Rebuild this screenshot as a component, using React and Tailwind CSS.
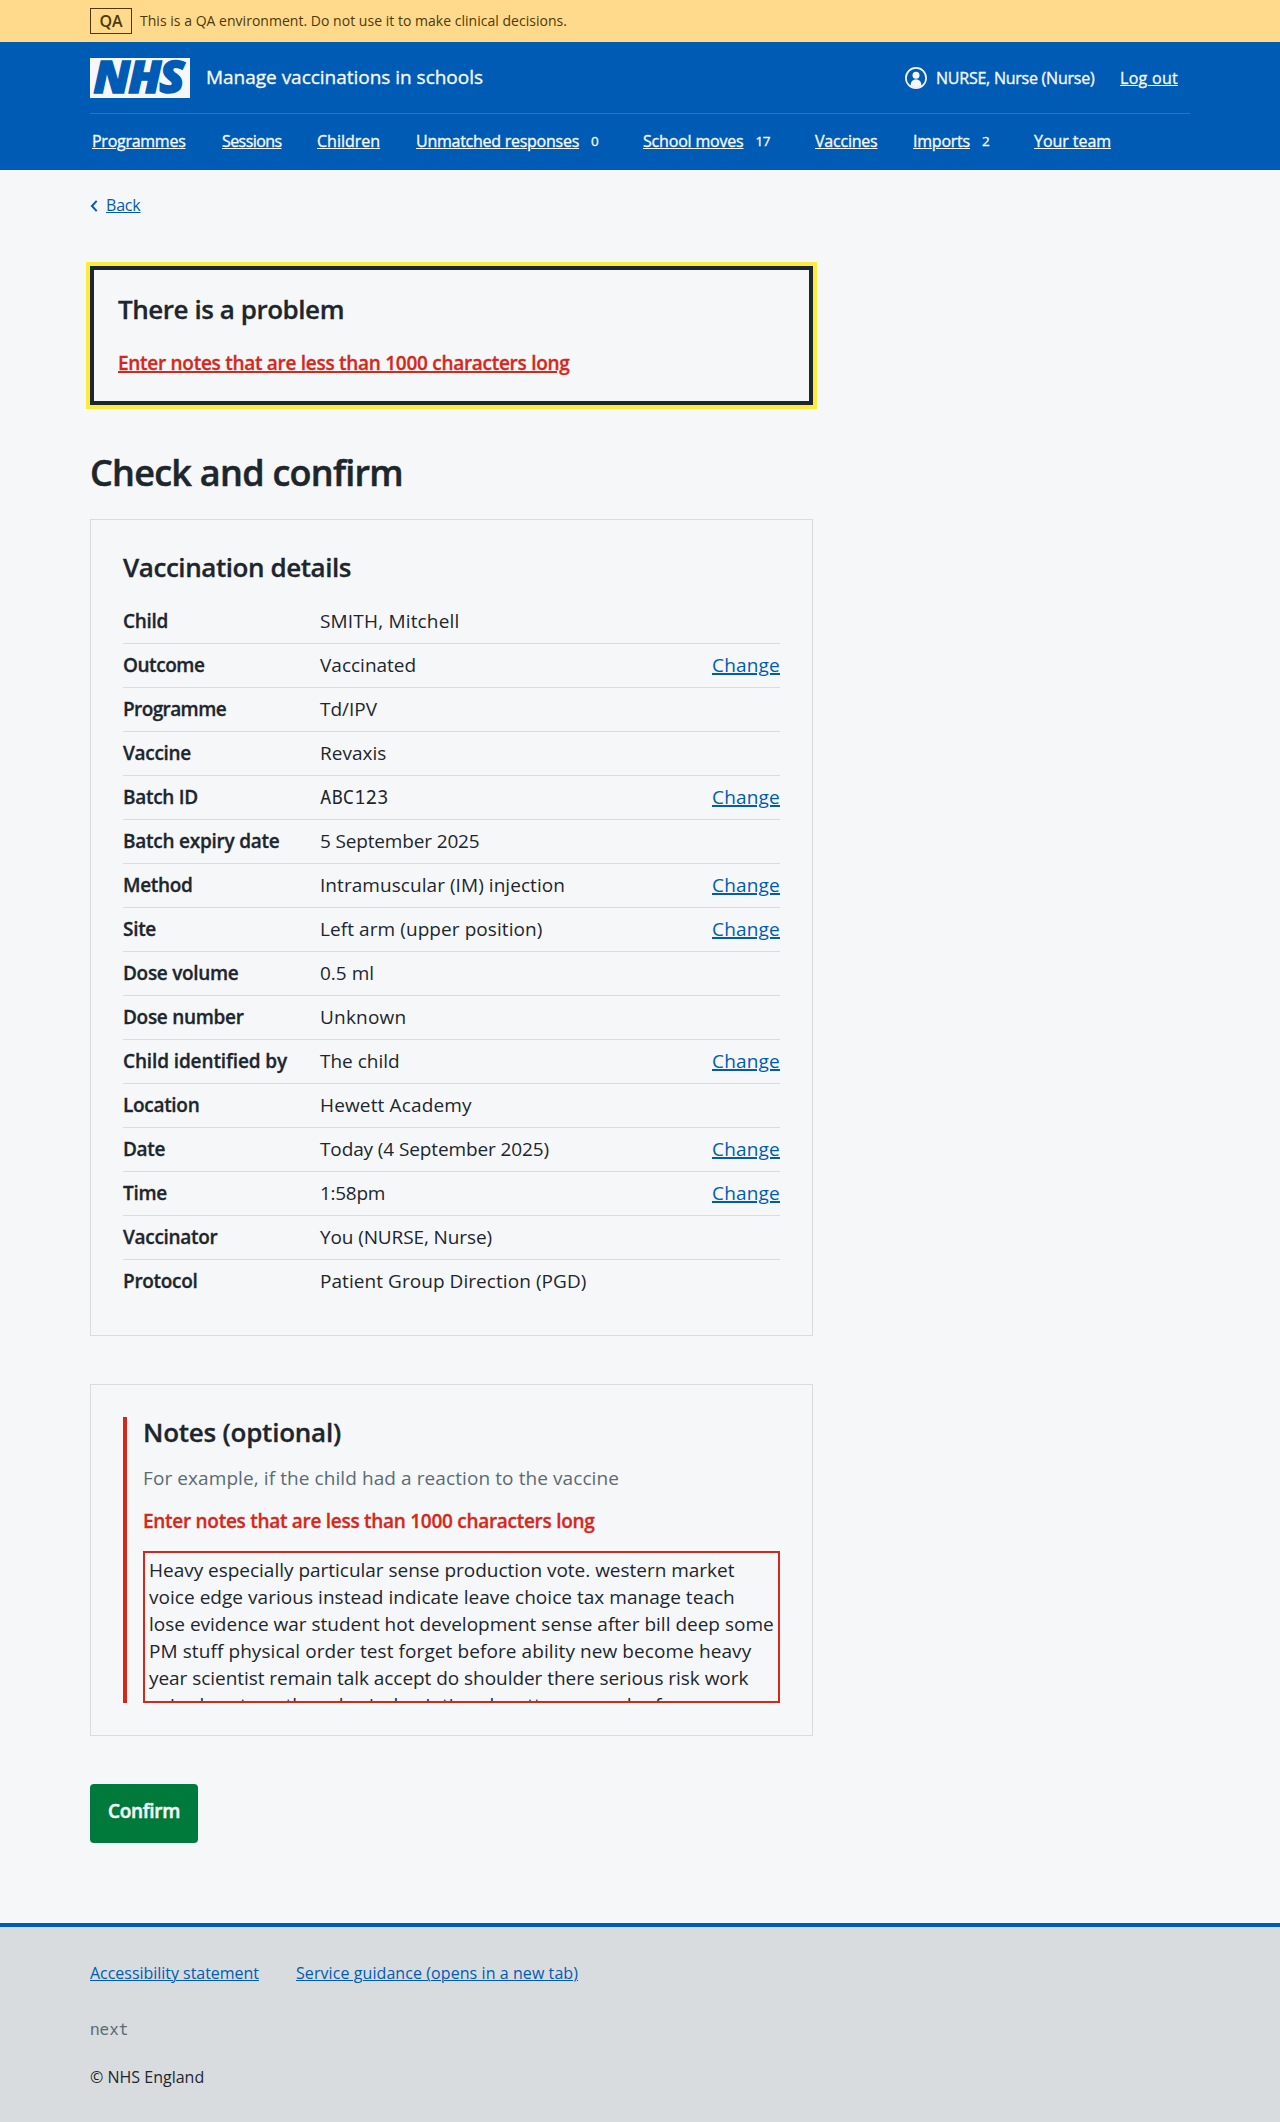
import React from "react";

const LINK = "underline decoration-1 underline-offset-[1px]";

const NAV = [
  { label: "Programmes", item: "w-[130px]", track: "tracking-[-0.0165em]" },
  { label: "Sessions", item: "w-[95px]", track: "tracking-[-0.036em]" },
  { label: "Children", item: "w-[99px]", track: "tracking-normal" },
  { label: "Unmatched responses", count: "0", item: "w-[227px]", track: "tracking-[-0.0161em]" },
  { label: "School moves", count: "17", item: "w-[172px]", track: "tracking-[-0.0116em]" },
  { label: "Vaccines", item: "w-[98px]", track: "tracking-[-0.0134em]" },
  { label: "Imports", count: "2", item: "w-[121px]", track: "tracking-[-0.014em]" },
  { label: "Your team", item: "w-[90px]", track: "tracking-[-0.0033em]" },
];

const ROWS = [
  { key: "Child", value: "SMITH, Mitchell", valueClass: "tracking-[0.0094em]" },
  { key: "Outcome", value: "Vaccinated", change: true, keyClass: "tracking-[-0.0237em]" },
  { key: "Programme", value: "Td/IPV", keyClass: "tracking-[-0.0318em]" },
  { key: "Vaccine", value: "Revaxis" },
  { key: "Batch ID", value: "ABC123", change: true, valueClass: "font-['Noto_Sans_Mono','DejaVu_Sans_Mono',monospace]" },
  { key: "Batch expiry date", value: "5 September 2025", valueClass: "tracking-[-0.0082em]", keyClass: "tracking-[-0.0129em]" },
  { key: "Method", value: "Intramuscular (IM) injection", change: true, valueClass: "tracking-[0.003em]" },
  { key: "Site", value: "Left arm (upper position)", change: true, valueClass: "tracking-[0.004em]" },
  { key: "Dose volume", value: "0.5 ml" },
  { key: "Dose number", value: "Unknown", valueClass: "tracking-[0.01em]" },
  { key: "Child identified by", value: "The child", change: true, keyClass: "tracking-[-0.0064em]" },
  { key: "Location", value: "Hewett Academy", valueClass: "tracking-[0.008em]" },
  { key: "Date", value: "Today (4 September 2025)", change: true, valueClass: "tracking-[-0.006em]" },
  { key: "Time", value: "1:58pm", change: true, valueClass: "tracking-[-0.015em]" },
  { key: "Vaccinator", value: "You (NURSE, Nurse)", valueClass: "tracking-[-0.006em]" },
  { key: "Protocol", value: "Patient Group Direction (PGD)", valueClass: "tracking-[0.003em]" },
];

const NOTES = [
  { text: "Heavy especially particular sense production vote. western market", track: "tracking-[-0.001em]" },
  { text: "voice edge various instead indicate leave choice tax manage teach", track: "tracking-[0.002em]" },
  { text: "lose evidence war student hot development sense after bill deep some", track: "tracking-normal" },
  { text: "PM stuff physical order test forget before ability new become heavy", track: "tracking-[0.0045em]" },
  { text: "year scientist remain talk accept do shoulder there serious risk work", track: "tracking-[-0.0025em]" },
  { text: "voice heart another physical painting she attorney under for", track: "tracking-normal" },
];

function NhsLogo() {
  return (
    <svg className="block h-10 w-[100px]" viewBox="0 0 100 40" role="img" aria-label="NHS">
      <rect width="100" height="40" fill="#f6f7f9" />
      <text
        x="3.6"
        y="35.3"
        fill="#005bb5"
        stroke="#005bb5"
        strokeWidth="1.4"
        fontFamily="'Open Sans', sans-serif"
        fontSize="44"
        fontWeight="800"
        fontStyle="italic"
        letterSpacing="-2"
        textLength="89"
        lengthAdjust="spacingAndGlyphs"
      >
        NHS
      </text>
    </svg>
  );
}

function UserIcon() {
  return (
    <svg className="block size-[22px]" viewBox="0 0 22 22" aria-hidden="true">
      <circle cx="11" cy="11" r="10.1" fill="none" stroke="#f6f7f9" strokeWidth="1.7" />
      <circle cx="11" cy="8.3" r="3.5" fill="#f6f7f9" />
      <path d="M5.7 18.8v-1.2a5.3 5.3 0 0 1 10.6 0v1.2A9.7 9.7 0 0 1 11 21a9.7 9.7 0 0 1-5.3-2.2z" fill="#f6f7f9" />
    </svg>
  );
}

function Header() {
  return (
    <header className="h-32 bg-[#005bb5] text-[#f6f7f9] [-webkit-text-stroke:0.35px_#f6f7f9]">
      <div className="mx-auto w-[1100px]">
        <div className="flex h-[72px] items-center justify-between border-b border-[#2b76c1] pt-px pr-3">
          <div className="flex items-center">
            <NhsLogo />
            <span className="mb-0.5 ml-4 text-[19px] leading-[27px] tracking-[-0.001em]">Manage vaccinations in schools</span>
          </div>
          <div className="flex items-center text-base leading-[22px]">
            <UserIcon />
            <span className="mb-px ml-[9px] w-[184px] tracking-[-0.015em] whitespace-nowrap">NURSE, Nurse (Nurse)</span>
            <a className={`${LINK} mb-px tracking-[0.018em]`}>Log out</a>
          </div>
        </div>
        <nav className="flex pt-[15px] pl-0.5 text-base leading-6">
          {NAV.map((n) => (
            <span key={n.label} className={`${n.item} flex shrink-0 whitespace-nowrap`}>
              <a className={`${LINK} ${n.track}`}>{n.label}</a>
              {n.count && <span className="ml-3 text-[13.5px] tracking-[-0.03em]">{n.count}</span>}
            </span>
          ))}
        </nav>
      </div>
    </header>
  );
}

function SummaryRow({ row, last }) {
  return (
    <div className={`flex pt-2 text-[19px] leading-[27px] ${last ? "h-[43px]" : "h-11 border-b border-[#d9dbde]"}`}>
      <dt className={`w-[197px] font-semibold [-webkit-text-stroke:0.3px_currentColor] ${row.keyClass ?? "tracking-[-0.016em]"}`}>
        {row.key}
      </dt>
      <dd className={`flex-1 ${row.valueClass ?? ""}`}>{row.value}</dd>
      {row.change && (
        <dd className="tracking-[0.0104em]">
          <a className="text-[#005bb5] underline decoration-[1.5px] underline-offset-[1px]">Change</a>
        </dd>
      )}
    </div>
  );
}

export default function App() {
  return (
    <div className="h-[2122px] bg-[#f6f7f9] font-['Open_Sans','Noto_Sans',sans-serif] text-[#1d262d]">
      <div className="h-[42px] bg-[#ffda8c] text-[#4d3906]">
        <div className="mx-auto flex w-[1100px] items-start pt-2">
          <strong className="h-[26px] w-[42px] border border-[#4d3906] text-center text-base leading-6 font-semibold">QA</strong>
          <span className="mt-[3px] ml-2 text-sm leading-[19px] tracking-[0.0017em]">
            This is a QA environment. Do not use it to make clinical decisions.
          </span>
        </div>
      </div>

      <Header />

      <main className="mx-auto w-[1100px] pt-[23px]">
        <div className="flex h-6 items-center text-[#005bb5]">
          <svg className="block h-3 w-2 translate-y-px" viewBox="0 0 8 12" fill="none" stroke="currentColor" strokeWidth="2" aria-hidden="true">
            <path d="M6.7 .9 1.9 6l4.8 5.1" />
          </svg>
          <a className={`ml-2 text-base leading-6 tracking-[-0.0125em] ${LINK}`}>Back</a>
        </div>

        <div className="mt-[49px] h-[139px] w-[723px] border-4 border-[#1d262d] px-6 pt-[21px] outline-4 outline-[#ffeb3b]">
          <h2 className="text-[26px] leading-9 font-semibold tracking-[-0.0174em] [-webkit-text-stroke:0.3px_currentColor]">There is a problem</h2>
          <p className="mt-[23px] text-[19px] leading-[27px] font-semibold tracking-[-0.0149em] text-[#d5281b] [-webkit-text-stroke:0.3px_currentColor]">
            <a className="underline decoration-[1.5px] underline-offset-[1px]">Enter notes that are less than 1000 characters long</a>
          </p>
        </div>

        <h1 className="mt-[43px] text-[36px] leading-[49px] font-semibold tracking-[-0.0204em] [-webkit-text-stroke:0.5px_currentColor]">
          Check and confirm
        </h1>

        <section className="mt-[22px] w-[723px] border border-[#d9dbde] p-8">
          <h2 className="text-[26px] leading-[30px] font-semibold tracking-[-0.0168em] [-webkit-text-stroke:0.3px_currentColor]">Vaccination details</h2>
          <dl className="mt-[18px]">
            {ROWS.map((row, i) => (
              <SummaryRow key={row.key} row={row} last={i === ROWS.length - 1} />
            ))}
          </dl>
        </section>

        <section className="mt-12 h-[352px] w-[723px] border border-[#d9dbde] p-8">
          <div className="h-[286px] border-l-4 border-[#d5281b] pl-4">
            <h2 className="text-[26px] leading-[30px] font-semibold tracking-[-0.0089em] [-webkit-text-stroke:0.3px_currentColor]">Notes (optional)</h2>
            <p className="mt-[18px] text-[19px] leading-[27px] tracking-[0.0046em] text-[#5b6b76]">
              For example, if the child had a reaction to the vaccine
            </p>
            <p className="mt-4 text-[19px] leading-[27px] font-semibold tracking-[-0.0149em] text-[#d5281b] [-webkit-text-stroke:0.3px_currentColor]">
              Enter notes that are less than 1000 characters long
            </p>
            <div className="mt-4 h-[152px] overflow-hidden border-2 border-[#d5281b] p-1 text-[19px] leading-[27px] whitespace-nowrap">
              {NOTES.map((line) => (
                <div key={line.text} className={line.track}>
                  {line.text}
                </div>
              ))}
            </div>
          </div>
        </section>

        <button className="mt-12 block h-[59px] w-[108px] rounded-[4px] bg-[#007a3a] pb-[4px] text-[19px] leading-[27px] font-semibold tracking-[-0.0166em] text-[#f6f7f9] [-webkit-text-stroke:0.5px_currentColor]">
          Confirm
        </button>
      </main>

      <footer className="mt-20 h-[199px] border-t-4 border-[#005bb5] bg-[#d8dcdf]">
        <div className="mx-auto w-[1100px] pt-[34px] text-base leading-6">
          <div className="flex text-[#005bb5]">
            <a className={`w-[169px] tracking-[-0.002em] whitespace-nowrap ${LINK}`}>Accessibility statement</a>
            <a className={`ml-[37px] tracking-[0.0048em] ${LINK}`}>Service guidance (opens in a new tab)</a>
          </div>
          <p className="mt-8 font-['Noto_Sans_Mono','DejaVu_Sans_Mono',monospace] text-[#5b6b76]">next</p>
          <p className="mt-6">© NHS England</p>
        </div>
      </footer>
    </div>
  );
}
